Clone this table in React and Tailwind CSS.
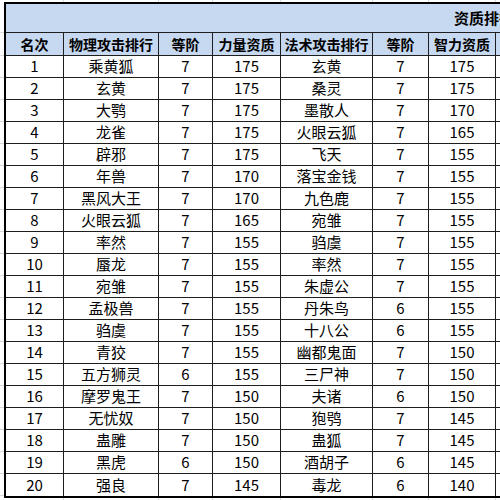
import React from 'react';

const rows = [
  [1, '乘黄狐', 7, 175, '玄黄', 7, 175],
  [2, '玄黄', 7, 175, '桑灵', 7, 175],
  [3, '大鹗', 7, 175, '墨散人', 7, 170],
  [4, '龙雀', 7, 175, '火眼云狐', 7, 165],
  [5, '辟邪', 7, 175, '飞天', 7, 155],
  [6, '年兽', 7, 170, '落宝金钱', 7, 155],
  [7, '黑风大王', 7, 170, '九色鹿', 7, 155],
  [8, '火眼云狐', 7, 165, '宛雏', 7, 155],
  [9, '率然', 7, 155, '驺虞', 7, 155],
  [10, '蜃龙', 7, 155, '率然', 7, 155],
  [11, '宛雏', 7, 155, '朱虚公', 7, 155],
  [12, '孟极兽', 7, 155, '丹朱鸟', 6, 155],
  [13, '驺虞', 7, 155, '十八公', 6, 155],
  [14, '青狡', 7, 155, '幽都鬼面', 7, 150],
  [15, '五方狮灵', 6, 155, '三尸神', 7, 150],
  [16, '摩罗鬼王', 7, 150, '夫诸', 6, 150],
  [17, '无忧奴', 7, 150, '狍鸮', 7, 145],
  [18, '蛊雕', 7, 150, '蛊狐', 7, 145],
  [19, '黑虎', 6, 150, '酒胡子', 6, 145],
  [20, '强良', 7, 145, '毒龙', 6, 140],
];

const headers = ['名次', '物理攻击排行', '等阶', '力量资质', '法术攻击排行', '等阶', '智力资质', ''];

const widths = ['w-[58px]', 'w-[95px]', 'w-[54px]', 'w-[68px]', 'w-[92px]', 'w-[56px]', 'w-[67px]', 'w-[100px]'];

// faint spreadsheet gridlines outside the bordered block
const GridStrip = ({ h }) => (
  <div className={`flex ${h}`}>
    <div className="w-[6px] shrink-0" />
    {widths.map((w, i) => (
      <div key={i} className={`${w} shrink-0 border-r border-[#d8d8d8]`} />
    ))}
  </div>
);

const Cell = ({ w, children, last }) => (
  <div
    className={`${w} shrink-0 flex items-center justify-center ${last ? '' : 'border-r border-[#1e1e1e]'}`}
  >
    {children}
  </div>
);

export default function App() {
  return (
    <div className="w-[500px] h-[500px] overflow-hidden bg-white text-black font-['Noto_Sans_CJK_SC','Noto_Sans',sans-serif]">
      <GridStrip h="h-[2px]" />
      <div className="flex">
        <div className="w-[4px] shrink-0 flex flex-col">
          <div className="h-[31px] border-b border-[#d8d8d8]" />
          <div className="h-[23px] border-b border-[#d8d8d8]" />
          {rows.map((r) => (
            <div key={r[0]} className="h-[22px] border-b border-[#d8d8d8]" />
          ))}
        </div>
        <div className="shrink-0 border-t-2 border-l-2 border-b-2 border-black">
          <div className="h-[29px] bg-[#c6d9f1] border-b border-[#1e1e1e] flex items-center pl-[448px] whitespace-nowrap text-[15px] font-bold">
            资质排行榜
          </div>
          <div className="h-[23px] bg-[#c6d9f1] border-b border-[#1e1e1e] flex text-[14px] font-bold">
            {headers.map((t, i) => (
              <Cell key={i} w={widths[i]} last={i === 7}>
                {t}
              </Cell>
            ))}
          </div>
          {rows.map((r) => (
            <div key={r[0]} className="h-[22px] border-b border-[#1e1e1e] last:border-b-0 flex text-[15px]">
              {r.map((v, i) => (
                <Cell key={i} w={widths[i]}>
                  {v}
                </Cell>
              ))}
              <Cell w={widths[7]} last />
            </div>
          ))}
        </div>
      </div>
      <GridStrip h="h-[4px]" />
    </div>
  );
}
